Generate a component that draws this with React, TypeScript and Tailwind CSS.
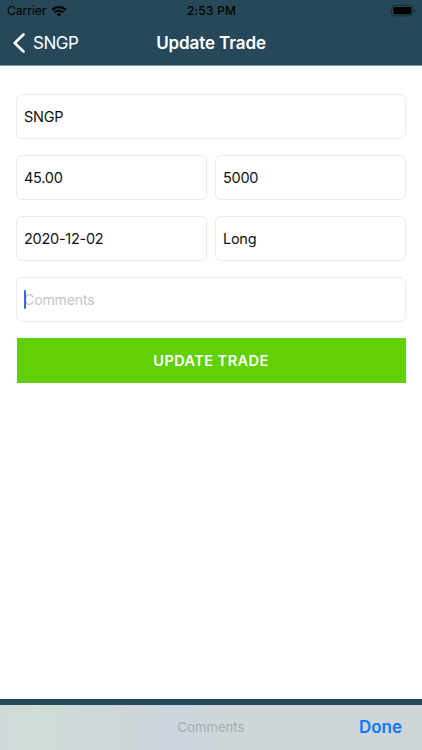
import React from 'react';

interface FieldProps {
  value?: string;
  placeholder?: string;
  focused?: boolean;
}

const Field: React.FC<FieldProps> = ({ value, placeholder, focused }) => (
  <div className="flex h-[45px] min-w-0 flex-1 items-center rounded-[6px] border border-[#ebebeb] bg-white pl-[7px] text-[14.5px]">
    {value && <span className="tracking-[-0.27px] text-[#111111]">{value}</span>}
    {!value && (
      <span className="relative text-[14px] tracking-[-0.1px] text-[#c5c5c7]">
        {placeholder}
        {focused && <span className="absolute top-px left-0 h-[19px] w-[2px] rounded-full bg-[#3f62dc]" />}
      </span>
    )}
  </div>
);

const StatusBar = () => (
  <div className="grid h-[21px] grid-cols-3 items-center pr-[6px] pl-[7px] text-[12px] text-black">
    <div className="flex items-center gap-[5px]">
      <span className="tracking-[0px]">Carrier</span>
      <svg width="16" height="12" viewBox="0 0 16 12">
        <path d="M.5 4.1a10.8 10.8 0 0 1 15 0l-1.5 1.6a8.6 8.6 0 0 0-12 0z" />
        <path d="M3 6.7a7.2 7.2 0 0 1 10 0l-1.5 1.5a5 5 0 0 0-7 0z" />
        <path d="M5.6 9.2a3.5 3.5 0 0 1 4.8 0L8 11.7z" />
      </svg>
    </div>
    <span className="pt-px text-center font-medium tracking-[0.2px]">2:53 PM</span>
    <svg className="justify-self-end" width="26" height="12" viewBox="0 0 26 12">
      <rect x="1.5" y=".5" width="21.5" height="10.4" rx="3" fill="none" stroke="#152c37" />
      <rect x="3.2" y="2.1" width="18" height="7.2" rx="1.4" />
      <path d="M24.2 3.9v3.6c.9-.3 1.3-1 1.3-1.8s-.4-1.5-1.3-1.8z" fill="#152c37" />
    </svg>
  </div>
);

const NavBar = () => (
  <div className="grid h-[44px] grid-cols-3 items-center px-[13px] text-[17px] text-white">
    <button className="flex items-center gap-[8px]">
      <svg width="12" height="20" viewBox="0 0 12 20" fill="none" stroke="white" strokeWidth="2.6" strokeLinecap="round" strokeLinejoin="round">
        <path d="M10.5 1.5 1.7 10l8.8 8.5" />
      </svg>
      <span className="pt-[2px] tracking-[-0.5px]">SNGP</span>
    </button>
    <h1 className="pt-[2px] text-center font-semibold tracking-[-0.1px] whitespace-nowrap">Update Trade</h1>
  </div>
);

export default function App() {
  return (
    <div className="flex h-[750px] w-[422px] flex-col overflow-hidden bg-white font-['Inter',sans-serif]">
      <header className="h-[66px] border-b border-[#7e929b] bg-[#264858]">
        <StatusBar />
        <NavBar />
      </header>

      <main className="flex flex-1 flex-col gap-4 px-[16px] pt-[28px]">
        <div className="flex">
          <Field value="SNGP" />
        </div>
        <div className="flex gap-2">
          <Field value="45.00" />
          <Field value="5000" />
        </div>
        <div className="flex gap-2">
          <Field value="2020-12-02" />
          <Field value="Long" />
        </div>
        <div className="flex">
          <Field placeholder="Comments" focused />
        </div>
        <button className="mr-[0.5px] ml-[0.5px] h-[45px] bg-[#61d006] text-[14.5px] font-semibold tracking-[0.45px] text-white">
          UPDATE TRADE
        </button>
      </main>

      {/* Keyboard accessory */}
      <footer className="border-t-[6px] border-[#264858]">
        <div className="grid h-[45px] grid-cols-3 items-center bg-[linear-gradient(90deg,#ced7d9_0%,#cfdcd6_4%,#cdddd5_12%,#ced7da_17%,#ced6da_32%,#cbd5de_42%,#ced6da_52%,#ced6da_100%)] px-[20px]">
          <span />
          <span className="text-center text-[13px] tracking-[0.1px] text-[#a7abae]">Comments</span>
          <button className="pt-px text-right text-[17px] font-semibold text-[#1078f4]">Done</button>
        </div>
      </footer>
    </div>
  );
}
